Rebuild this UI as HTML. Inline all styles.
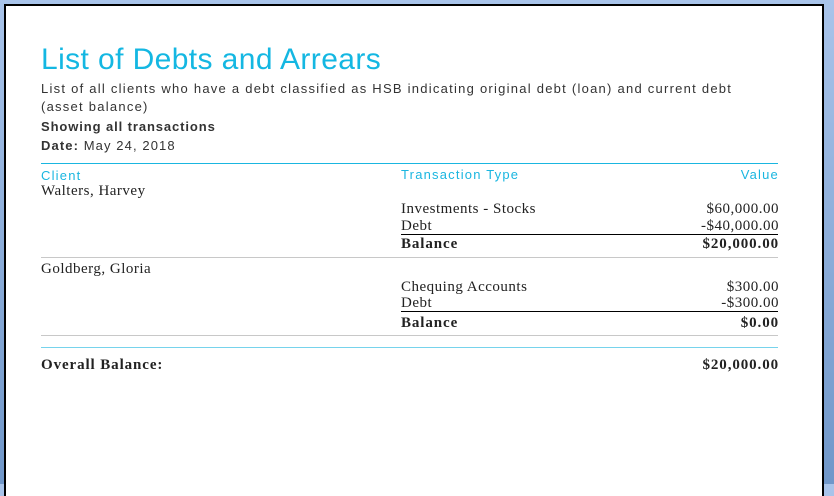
<!DOCTYPE html><html><head><style>
body{margin:0;width:834px;height:484px;overflow:hidden;background:linear-gradient(#a9c4ea,#7097c9);position:relative;font-family:"Liberation Sans",sans-serif}
.page{position:absolute;left:4px;top:4px;width:816px;height:490px;background:#fff;border:2px solid #000;border-bottom:none}
.a{position:absolute;white-space:nowrap}
.s{font-family:"Liberation Serif",serif;font-size:15px;color:#222;letter-spacing:0.5px}
.r{text-align:right;right:43px}
.b{font-weight:bold}
.s.b{letter-spacing:0.9px}
.ln{position:absolute;left:35px;width:737px;height:1px}
.c{color:#1ab6e0;font-size:13px;letter-spacing:1.2px}
</style></head><body><div class="page">
<div class="a" style="left:35px;top:37px;font-size:30px;color:#14b7e2;letter-spacing:0.4px">List of Debts and Arrears</div>
<div class="a" style="left:35px;top:74px;font-size:13px;color:#333;letter-spacing:1.25px;line-height:18px">List of all clients who have a debt classified as HSB indicating original debt (loan) and current debt<br>(asset balance)</div>
<div class="a b" style="left:35px;top:113px;font-size:13px;color:#333;letter-spacing:0.9px">Showing all transactions</div>
<div class="a" style="left:35px;top:132px;font-size:13px;color:#333;letter-spacing:1.1px"><b>Date:</b> May 24, 2018</div>
<div class="ln" style="top:157px;background:#1ab6e0"></div>
<div class="a c" style="left:35px;top:162px">Client</div>
<div class="a c" style="left:395px;top:161px">Transaction Type</div>
<div class="a c r" style="top:161px">Value</div>
<div class="a s" style="left:35px;top:177px">Walters, Harvey</div>
<div class="a s" style="left:395px;top:195px">Investments - Stocks</div><div class="a s r" style="top:195px">$60,000.00</div>
<div class="a s" style="left:395px;top:212px">Debt</div><div class="a s r" style="top:212px">-$40,000.00</div>
<div class="ln" style="top:228px;left:395px;width:377px;background:#000"></div>
<div class="a s b" style="left:395px;top:230px">Balance</div><div class="a s b r" style="top:230px">$20,000.00</div>
<div class="ln" style="top:251px;background:#c8c8c8"></div>
<div class="a s" style="left:35px;top:255px">Goldberg, Gloria</div>
<div class="a s" style="left:395px;top:273px">Chequing Accounts</div><div class="a s r" style="top:273px">$300.00</div>
<div class="a s" style="left:395px;top:289px">Debt</div><div class="a s r" style="top:289px">-$300.00</div>
<div class="ln" style="top:305px;left:395px;width:377px;background:#000"></div>
<div class="a s b" style="left:395px;top:309px">Balance</div><div class="a s b r" style="top:309px">$0.00</div>
<div class="ln" style="top:329px;background:#c8c8c8"></div>
<div class="ln" style="top:341px;background:#1ab6e0;opacity:.6"></div>
<div class="a s b" style="left:35px;top:351px">Overall Balance:</div><div class="a s b r" style="top:351px">$20,000.00</div>
</div></body></html>
